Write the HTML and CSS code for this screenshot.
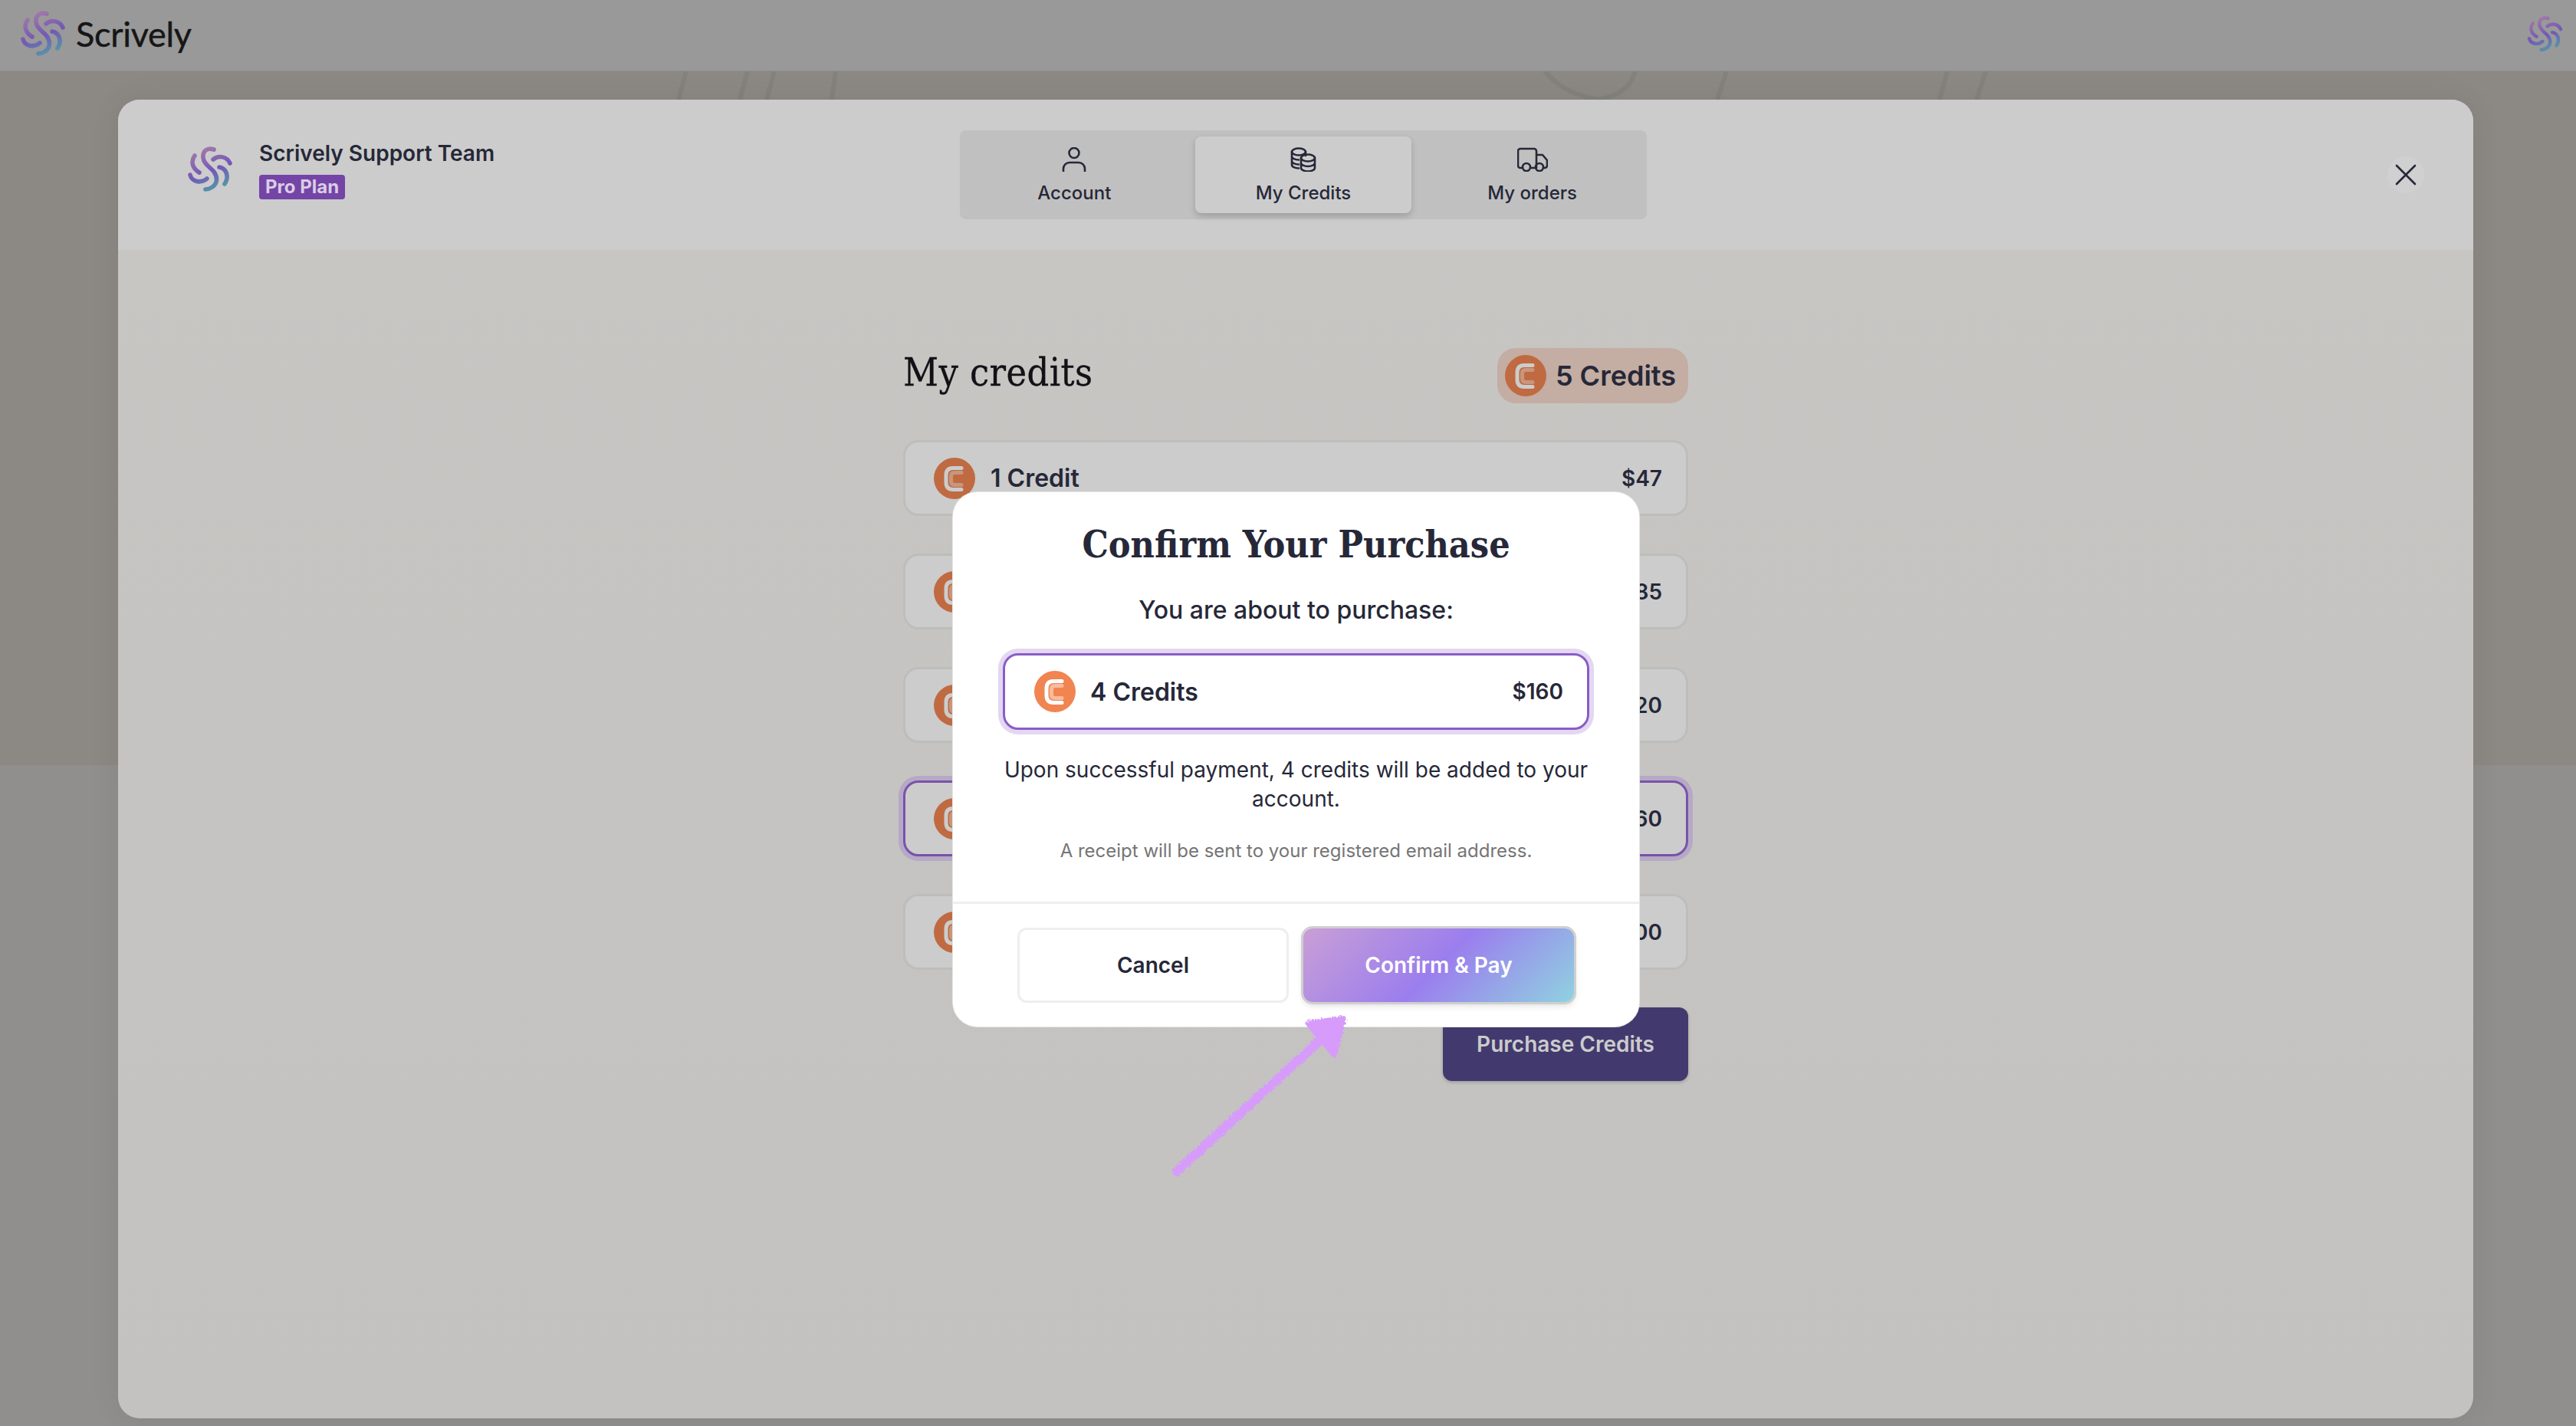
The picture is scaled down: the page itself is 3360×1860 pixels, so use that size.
FILE: index.html
```html
<!DOCTYPE html>
<html lang="en">
<head>
<meta charset="utf-8">
<title>Scrively</title>
<link rel="stylesheet" href="styles.css">
</head>
<body>
<svg class="defs" width="0" height="0" aria-hidden="true">
  <defs>
    <linearGradient id="swirl" gradientUnits="userSpaceOnUse" x1="20" y1="6" x2="44" y2="66">
      <stop offset="0" stop-color="#a87fa6"/>
      <stop offset=".55" stop-color="#7458b6"/>
      <stop offset="1" stop-color="#4f9fa8"/>
    </linearGradient>
    <symbol id="logo" viewBox="0 0 72 72">
      <g fill="none" stroke="url(#swirl)" stroke-width="5.6" stroke-linecap="round">
        <path d="M41 10C32 7 26 12 27 21C28 29 36 33 41 39C46 46 46 54 39 59C36 61 33 62 30 62"/>
        <path d="M16 18C11 25 12 34 22 40"/>
        <path d="M10 43C12 52 24 55 32 48"/>
        <path d="M40 23C47 17 58 19 62 28"/>
        <path d="M48 33C58 35 61 46 55 55"/>
      </g>
    </symbol>
    <symbol id="coin" viewBox="0 0 54 54">
      <circle class="coin-bg" cx="27" cy="27" r="27"/>
      <path class="coin-outer" d="M36 13.5H25Q16 13.5 16 23V32Q16 41.5 25 41.5H36"/>
      <path class="coin-inner" d="M36 19.5H27Q22.5 19.5 22.5 24V31Q22.5 35.5 27 35.5H36"/>
    </symbol>
    <filter id="rough" x="-10%" y="-10%" width="120%" height="120%">
      <feTurbulence type="fractalNoise" baseFrequency="0.35" numOctaves="2" seed="4"/>
      <feDisplacementMap in="SourceGraphic" scale="6"/>
    </filter>
  </defs>
</svg>

<div class="page">
  <header class="topbar">
    <div class="brand">
      <svg class="logo"><use href="#logo"/></svg>
      <span class="brand-name">Scrively</span>
    </div>
    <svg class="logo-small"><use href="#logo"/></svg>
  </header>

  <main class="stage">
    <svg class="backdrop-lines" viewBox="0 0 3360 37" preserveAspectRatio="none" aria-hidden="true">
      <path d="M895 0L885 37M975 0L965 37M1010 0L1000 37M1090 0L1085 37M2015 0Q2040 30 2085 37Q2125 30 2133 0M2252 0L2240 37M2540 0L2530 37M2590 0L2578 37"/>
    </svg>
    <section class="panel">
      <div class="panel-head">
        <div class="user">
          <svg class="logo user-logo"><use href="#logo"/></svg>
          <div class="user-info">
            <div class="user-name">Scrively Support Team</div>
            <span class="plan">Pro Plan</span>
          </div>
        </div>
        <nav class="tabs">
          <button class="tab">
            <svg class="tab-icon" viewBox="0 0 32 32" width="32" height="32"><circle cx="16" cy="7.5" r="6.5"/><path d="M2 32v-4a8 8 0 0 1 8-8h12a8 8 0 0 1 8 8v4"/></svg>
            <span>Account</span>
          </button>
          <button class="tab tab-active">
            <svg class="tab-icon" viewBox="0 0 36 32" width="36" height="32"><ellipse cx="12" cy="6" rx="9" ry="4.5"/><path d="M3 6v17c0 2.500 4 4.500 9 4.500M3 12c0 2.500 4 4.500 9 4.500M3 18c0 2.500 4 4.500 9 4.500M21 6v5"/><ellipse cx="24" cy="14" rx="9" ry="4.500"/><path d="M15 14v13c0 2.500 4 4.500 9 4.500s9-2 9-4.500V14M15 20.500c0 2.500 4 4.500 9 4.500s9-2 9-4.500"/></svg>
            <span>My Credits</span>
          </button>
          <button class="tab">
            <svg class="tab-icon" viewBox="0 0 40 32" width="40" height="32"><path d="M7 27H4a3 3 0 0 1-3-3V5a3 3 0 0 1 3-3h18a3 3 0 0 1 3 3v22H18M25 10h8l6 7v7a3 3 0 0 1-3 3h-2M25 27h-1"/><circle cx="12" cy="26" r="5"/><circle cx="29" cy="26" r="5"/></svg>
            <span>My orders</span>
          </button>
        </nav>
        <button class="close" aria-label="Close">
          <svg viewBox="0 0 28 28" width="28" height="28"><path d="M2 2L26 26M26 2L2 26"/></svg>
        </button>
      </div>

      <div class="panel-body">
        <div class="credits">
          <div class="credits-head">
            <h1 class="credits-title">My credits</h1>
            <div class="balance">
              <svg class="coin coin-dim"><use href="#coin"/></svg>
              <span>5 Credits</span>
            </div>
          </div>
          <div class="packs">
            <div class="pack"><div class="pack-name"><svg class="coin coin-dim"><use href="#coin"/></svg><span>1 Credit</span></div><span class="pack-price">$47</span></div>
            <div class="pack"><div class="pack-name"><svg class="coin coin-dim"><use href="#coin"/></svg><span>2 Credits</span></div><span class="pack-price">$85</span></div>
            <div class="pack"><div class="pack-name"><svg class="coin coin-dim"><use href="#coin"/></svg><span>3 Credits</span></div><span class="pack-price">$120</span></div>
            <div class="pack pack-selected"><div class="pack-name"><svg class="coin coin-dim"><use href="#coin"/></svg><span>4 Credits</span></div><span class="pack-price">$160</span></div>
            <div class="pack"><div class="pack-name"><svg class="coin coin-dim"><use href="#coin"/></svg><span>5 Credits</span></div><span class="pack-price">$200</span></div>
          </div>
          <button class="purchase">Purchase Credits</button>
        </div>
      </div>
    </section>
  </main>
</div>

<div class="modal" role="dialog">
  <div class="modal-body">
    <h2 class="modal-title">Confirm Your Purchase</h2>
    <p class="modal-lead">You are about to purchase:</p>
    <div class="summary">
      <div class="summary-name"><svg class="coin"><use href="#coin"/></svg><span>4 Credits</span></div>
      <span class="summary-price">$160</span>
    </div>
    <p class="modal-desc">Upon successful payment, 4 credits will be added to your account.</p>
    <p class="modal-note">A receipt will be sent to your registered email address.</p>
  </div>
  <div class="modal-actions">
    <button class="btn-cancel">Cancel</button>
    <button class="btn-confirm">Confirm &amp; Pay</button>
  </div>
</div>

<svg class="arrow" viewBox="1500 1300 300 260" width="300" height="260" aria-hidden="true">
  <g filter="url(#rough)">
    <path class="arrow-shaft" d="M1535 1528L1725 1354"/>
    <path class="arrow-head" d="M1707 1335L1752 1329L1740 1375Z"/>
  </g>
</svg>
</body>
</html>
```

FILE: styles.css
```css
* { box-sizing: border-box; }
html, body { margin: 0; height: 100%; }
body {
  font-family: "Inter", "Liberation Sans", sans-serif;
  color: #262838;
  overflow: hidden;
  position: relative;
}
button { font-family: inherit; color: inherit; cursor: pointer; }
.defs { position: absolute; }

.page { height: 1860px; display: flex; flex-direction: column; }

.topbar {
  height: 93px;
  flex: none;
  display: flex;
  align-items: flex-start;
  justify-content: space-between;
  background: #999999;
  border-bottom: 1px solid #929290;
  padding: 8px 12px 0 20px;
}
.brand { display: flex; align-items: center; gap: 7px; }
.logo { width: 72px; height: 72px; display: block; flex: none; }
.brand-name {
  font-family: "Lato", sans-serif;
  font-size: 45px;
  line-height: 72px;
  color: #161616;
  letter-spacing: -0.3px;
  -webkit-text-stroke: .4px #161616;
}
.logo-small { width: 57px; height: 57px; display: block; margin-top: 8px; }

.stage {
  flex: 1;
  position: relative;
  padding: 37px 134px 10px 154px;
  background: linear-gradient(#8c8883 0 905px, #908f8d 905px);
  display: flex;
  min-height: 0;
}
.backdrop-lines {
  position: absolute;
  left: 0; top: 0;
  width: 3360px;
  height: 37px;
}
.backdrop-lines path { fill: none; stroke: #84827d; stroke-width: 6; }

.panel {
  flex: 1;
  position: relative;
  border-radius: 28px;
  overflow: hidden;
  background: linear-gradient(#c7c6c3, #c3c2c0);
  display: flex;
  flex-direction: column;
  box-shadow: 0 0 40px rgba(0, 0, 0, .07);
}
.panel-head {
  height: 196px;
  flex: none;
  background: #cccccc;
  display: flex;
  align-items: flex-start;
  padding: 40px 64px 0 84px;
}
.user { display: flex; align-items: flex-start; gap: 28px; width: 406px; flex: none; }
.user-logo { margin-top: 15px; }
.user-info { padding-top: 12px; }
.user-name { font-size: 28px; font-weight: 600; line-height: 36px; white-space: nowrap; }
.plan {
  display: inline-block;
  margin-top: 10px;
  background: #7444a6;
  color: #d9cde4;
  font-size: 24px;
  font-weight: 700;
  line-height: 32px;
  padding: 0 8px;
  border-radius: 4px;
}

.tabs {
  width: 896px;
  height: 116px;
  flex: none;
  margin-left: 608px;
  background: #c0c0c0;
  border-radius: 8px;
  padding: 8px;
  display: grid;
  grid-template-columns: repeat(3, 1fr);
  gap: 16px;
}
.tab {
  border: 0;
  background: none;
  border-radius: 8px;
  display: flex;
  flex-direction: column;
  align-items: center;
  padding: 14px 0 0;
  gap: 12px;
  font-size: 24px;
  font-weight: 500;
  line-height: 32px;
  color: #262838;
}
.tab-active { background: #cccccc; box-shadow: 0 4px 8px rgba(0, 0, 0, .18); }
.tab-icon { fill: none; stroke: #262838; stroke-width: 2.6; stroke-linecap: round; stroke-linejoin: round; display: block; }

.close {
  margin-left: auto;
  margin-top: 34px;
  width: 48px;
  height: 48px;
  padding: 0;
  border: 0;
  border-radius: 50%;
  background: #d0d0d0;
  display: flex;
  align-items: center;
  justify-content: center;
}
.close path { fill: none; stroke: #262838; stroke-width: 2.6; stroke-linecap: round; }

.panel-body { flex: 1; display: flex; justify-content: center; padding-top: 128px; }
.credits { width: 1024px; display: flex; flex-direction: column; }
.credits-head { display: flex; justify-content: space-between; align-items: center; height: 72px; margin-bottom: 48px; }
.credits-title {
  margin: 0 0 8px;
  font-family: "DejaVu Serif Condensed", "DejaVu Serif", serif;
  font-stretch: condensed;
  font-size: 50px;
  font-weight: 400;
  letter-spacing: .4px;
  -webkit-text-stroke: .3px #111116;
  color: #111116;
}
.balance {
  height: 72px;
  display: flex;
  align-items: center;
  gap: 12px;
  padding: 0 16px 0 10px;
  background: #c4ada2;
  border-radius: 24px;
  font-size: 36px;
  font-weight: 600;
  color: #262838;
}
.coin { width: 54px; height: 54px; display: block; flex: none; }
.coin-bg { fill: #f08552; }
.coin-outer, .coin-inner { fill: none; stroke-linecap: round; stroke-width: 5; }
.coin-outer { stroke: #ffffff; }
.coin-inner { stroke: #fabb9b; }
.coin-dim { filter: brightness(.8); }

.packs { display: flex; flex-direction: column; gap: 50px; }
.pack {
  height: 99px;
  border: 3px solid #bdbdbb;
  border-radius: 20px;
  background: #cccccc;
  display: flex;
  align-items: center;
  justify-content: space-between;
  padding: 0 31px 0 37px;
  font-size: 32px;
  font-weight: 600;
}
.pack + .pack { margin-top: -1px; }
.pack-name { display: flex; align-items: center; gap: 20px; }
.pack-price { font-size: 28px; font-weight: 600; }
.pack-selected { border-color: #7a52aa; box-shadow: 0 0 0 6px #b5a9c6; }

.purchase {
  margin-top: 49px;
  align-self: flex-end;
  width: 320px;
  height: 96px;
  border: 0;
  border-radius: 12px;
  background: #423a6e;
  color: #cbcbcb;
  font-size: 28px;
  font-weight: 600;
  box-shadow: 0 2px 4px rgba(0, 0, 0, .2);
}

.modal {
  position: absolute;
  left: 1243px;
  top: 642px;
  width: 895px;
  height: 697px;
  background: #ffffff;
  border-radius: 32px;
  box-shadow: 0 0 0 1px #e6e6e6;
  display: flex;
  flex-direction: column;
}
.modal-body {
  height: 537px;
  border-bottom: 3px solid #eeeeee;
  padding: 38px 65px 0;
  display: flex;
  flex-direction: column;
  align-items: stretch;
  text-align: center;
}
.modal-title {
  margin: 0;
  font-family: "DejaVu Serif Condensed", "DejaVu Serif", serif;
  font-stretch: condensed;
  font-size: 48px;
  line-height: 60px;
  font-weight: 700;
  color: #262838;
}
.modal-lead { margin: 34px 0 0; font-size: 32px; line-height: 44px; font-weight: 500; }
.summary {
  margin-top: 34px;
  height: 100px;
  border: 3px solid #8a5cc7;
  border-radius: 20px;
  box-shadow: 0 0 0 6px #e3d7f2;
  display: flex;
  align-items: center;
  justify-content: space-between;
  padding: 0 31px 0 38px;
  font-size: 32px;
  font-weight: 600;
}
.summary-name { display: flex; align-items: center; gap: 19px; }
.summary-price { font-size: 28px; font-weight: 600; }
.modal-desc { margin: 33px 0 0; font-size: 28px; line-height: 38px; color: #262838; }
.modal-note { margin: 32px 0 0; font-size: 24px; line-height: 34px; color: #757575; }

.modal-actions { flex: 1; display: flex; gap: 19px; padding: 31px 0 0 84px; align-items: flex-start; }
.btn-cancel {
  width: 354px;
  height: 98px;
  border: 3px solid #eeeeee;
  border-radius: 12px;
  background: #ffffff;
  font-size: 28px;
  font-weight: 600;
  color: #262838;
}
.btn-confirm {
  width: 353px;
  height: 96px;
  margin-top: 1px;
  border: 0;
  border-radius: 12px;
  background: linear-gradient(135deg, #c99fd6 0%, #9b7eee 50%, #8fd2e0 100%);
  box-shadow: 0 0 0 3px #cfcfcf, 0 4px 10px rgba(0, 0, 0, .15);
  color: #ffffff;
  font-size: 28px;
  font-weight: 600;
}

.arrow { position: absolute; left: 1500px; top: 1300px; }
.arrow-shaft { fill: none; stroke: #d79bfb; stroke-width: 12; stroke-linecap: round; }
.arrow-head { fill: #d79bfb; stroke: #d79bfb; stroke-width: 8; stroke-linejoin: round; }
```
